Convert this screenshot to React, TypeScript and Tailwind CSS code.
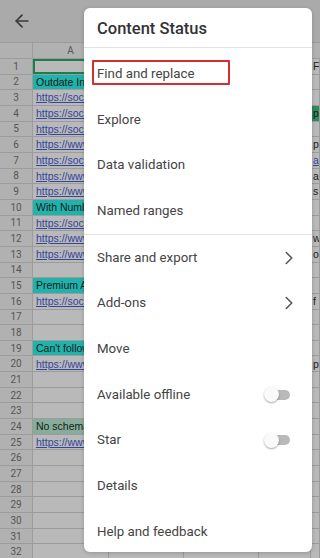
import { ArrowLeft, ChevronRight } from "lucide-react";

type Kind = "plain" | "link" | "teal" | "mint" | "sel" | "green";
type Cell = { text?: string; kind?: Kind };

// column A of the sheet behind the menu
const colA: Cell[] = [
  { kind: "sel" },
  { text: "Outdate Instagram", kind: "teal" },
  { text: "https://social.example", kind: "link" },
  { text: "https://social.example", kind: "link" },
  { text: "https://social.example", kind: "link" },
  { text: "https://www.example", kind: "link" },
  { text: "https://social.example", kind: "link" },
  { text: "https://www.example", kind: "link" },
  { text: "https://www.example", kind: "link" },
  { text: "With Numbers", kind: "teal" },
  { text: "https://social.example", kind: "link" },
  { text: "https://www.example", kind: "link" },
  { text: "https://www.example", kind: "link" },
  {},
  { text: "Premium Accounts", kind: "teal" },
  { text: "https://social.example", kind: "link" },
  {},
  {},
  { text: "Can't follow", kind: "teal" },
  { text: "https://www.example", kind: "link" },
  {},
  {},
  {},
  { text: "No schema", kind: "mint" },
  { text: "https://www.example", kind: "link" },
  {},
  {},
  {},
  {},
  {},
  {},
  {},
];

// column E, only a sliver shows at the right edge
const colE: Record<number, Cell> = {
  0: { text: "F" },
  3: { text: "pp", kind: "green" },
  5: { text: "p" },
  6: { text: "a", kind: "link" },
  7: { text: "ail" },
  8: { text: "s" },
  11: { text: "w" },
  12: { text: "o" },
  15: { text: "f" },
  19: { text: "p" },
};

const kindClass: Record<Kind, string> = {
  plain: "text-[#222]",
  link: "text-[#34459c] underline",
  teal: "bg-[#1fb3ac] text-[#1a1a1a]",
  mint: "bg-[#86ad9b] text-[#1a1a1a]",
  sel: "outline-2 -outline-offset-2 outline-[#1e7d4f]",
  green: "bg-[#2e8b5a] text-[#1a1a1a]",
};

const SheetCell = ({ cell, className }: { cell?: Cell; className: string }) => (
  <div
    className={`${className} h-full border-r border-[#9c9c9c] flex items-center overflow-hidden whitespace-nowrap font-['Liberation_Sans',sans-serif] text-[10.5px] leading-none ${
      cell ? kindClass[cell.kind || "plain"] : ""
    }`}
  >
    {cell?.text}
  </div>
);

const Sheet = () => (
  <div className="flex flex-col bg-[#b9b9b9]">
    <div className="h-[42px] bg-[#aaaaaa] flex items-center pl-[12px] text-[#3a3a3a]">
      <ArrowLeft size={20} strokeWidth={2} />
    </div>
    <div className="h-[17px] flex bg-[#b1b1b1] border-y border-[#9c9c9c] text-[10px] text-[#555]">
      <div className="w-[33px] h-full border-r border-[#9c9c9c]" />
      <div className="w-[76px] h-full border-r border-[#9c9c9c] flex items-center justify-center">A</div>
      <div className="w-[75px] h-full border-r border-[#9c9c9c] flex items-center justify-center">B</div>
      <div className="w-[75px] h-full border-r border-[#9c9c9c] flex items-center justify-center">C</div>
      <div className="w-[52px] h-full border-r border-[#9c9c9c] flex items-center justify-center">D</div>
      <div className="flex-1" />
    </div>
    {colA.map((cell, i) => (
      <div key={i} className="h-[15.67px] flex border-b border-[#9c9c9c]">
        <div className="w-[33px] h-full bg-[#b1b1b1] border-r border-[#9c9c9c] flex items-center justify-center text-[10px] text-[#555]">
          {i + 1}
        </div>
        <SheetCell cell={cell} className="w-[76px] pl-[3px]" />
        <SheetCell className="w-[75px]" />
        <SheetCell className="w-[75px]" />
        <SheetCell className="w-[52px]" />
        <SheetCell cell={colE[i]} className="flex-1 pl-[2px]" />
      </div>
    ))}
  </div>
);

const Toggle = () => (
  <div className="relative w-[26px] h-[15px] mr-[22px]">
    <div className="absolute right-0 top-[2.5px] h-[10px] w-[19px] rounded-full bg-[#b9b9b9]" />
    <div className="absolute left-0 top-0 h-[15px] w-[15px] rounded-full bg-[#fafafa] shadow-[0_1px_2px_rgba(0,0,0,0.35)]" />
  </div>
);

const groupOne = ["Find and replace", "Explore", "Data validation", "Named ranges"];
const groupTwo: { label: string; trail?: "chevron" | "toggle" }[] = [
  { label: "Share and export", trail: "chevron" },
  { label: "Add-ons", trail: "chevron" },
  { label: "Move" },
  { label: "Available offline", trail: "toggle" },
  { label: "Star", trail: "toggle" },
  { label: "Details" },
  { label: "Help and feedback" },
];

const MenuItem = ({ label, trail }: { label: string; trail?: "chevron" | "toggle" }) => (
  <div className="h-[45.7px] flex items-center justify-between pl-[13px] text-[13.3px] text-[#444]">
    <span>{label}</span>
    {trail === "chevron" && <ChevronRight size={22} strokeWidth={1.7} className="mr-[12px] text-[#555]" />}
    {trail === "toggle" && <Toggle />}
  </div>
);

export default function App() {
  return (
    <div className="relative w-[320px] h-[558px] overflow-hidden font-['Roboto',sans-serif]">
      <Sheet />
      <div className="absolute left-[84px] top-[8px] w-[228px] h-[544px] overflow-hidden rounded-[6px] bg-white shadow-[0_1px_4px_rgba(0,0,0,0.2)]">
        <div className="h-[39px] flex items-center pl-[13px] pt-[3px] text-[16.5px] font-medium text-[#333]">Content Status</div>
        <div className="h-px bg-[#e3e3e3]" />
        <div className="pt-[3px]">
          {groupOne.map((label) => (
            <MenuItem key={label} label={label} />
          ))}
        </div>
        <div className="h-px bg-[#e3e3e3]" />
        {groupTwo.map((item) => (
          <MenuItem key={item.label} {...item} />
        ))}
        <div className="absolute left-[8px] top-[52px] w-[138px] h-[25px] border-2 border-[#d32f2f] rounded-[1px]" />
      </div>
    </div>
  );
}
